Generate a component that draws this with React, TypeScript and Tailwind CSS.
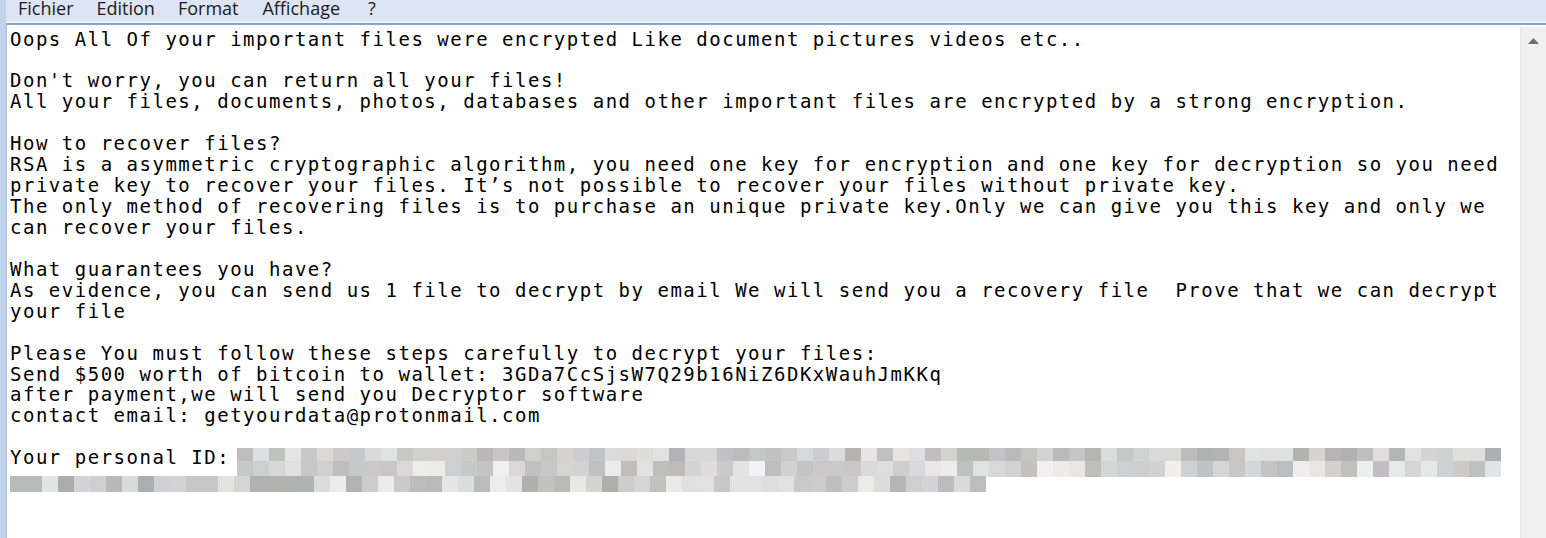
import React from "react";

const LINES: string[] = [
  "Oops All Of your important files were encrypted Like document pictures videos etc..",
  "",
  "Don't worry, you can return all your files!",
  "All your files, documents, photos, databases and other important files are encrypted by a strong encryption.",
  "",
  "How to recover files?",
  "RSA is a asymmetric cryptographic algorithm, you need one key for encryption and one key for decryption so you need",
  "private key to recover your files. It\u2019s not possible to recover your files without private key.",
  "The only method of recovering files is to purchase an unique private key.Only we can give you this key and only we",
  "can recover your files.",
  "",
  "What guarantees you have?",
  "As evidence, you can send us 1 file to decrypt by email We will send you a recovery file  Prove that we can decrypt",
  "your file",
  "",
  "Please You must follow these steps carefully to decrypt your files:",
  "Send $500 worth of bitcoin to wallet: 3GDa7CcSjsW7Q29b16NiZ6DKxWauhJmKKq",
  "after payment,we will send you Decryptor software",
  "contact email: getyourdata@protonmail.com",
  "",
];

function makeRng(seed: number) {
  let s = seed >>> 0;
  return () => {
    s = (s * 1664525 + 1013904223) >>> 0;
    return s / 4294967296;
  };
}

function blockColors(n: number, seed: number, lo: number, hi: number): string[] {
  const r = makeRng(seed);
  const out: string[] = [];
  for (let i = 0; i < n; i++) {
    const base = Math.round(lo + r() * (hi - lo));
    const tint = Math.round((r() - 0.5) * 8);
    const rr = Math.min(255, base + tint);
    const gg = Math.min(255, base);
    const bb = Math.min(255, base + Math.round((r() - 0.5) * 8));
    out.push(`rgb(${rr},${gg},${bb})`);
  }
  return out;
}

const ROW1 = blockColors(79, 7, 176, 228);
const ROW2 = blockColors(79, 19, 188, 242);
const ROW3 = blockColors(61, 43, 170, 236);

function BlockRow({ colors, h }: { colors: string[]; h: string }) {
  return (
    <div className={`flex ${h}`}>
      {colors.map((c, i) => (
        <div key={i} className="w-[16px] shrink-0" style={{ backgroundColor: c }} />
      ))}
    </div>
  );
}

export default function App() {
  const mono = { fontFamily: '"DejaVu Sans Mono", "Liberation Mono", monospace' };
  return (
    <div className="flex h-[538px] w-[1546px] overflow-hidden bg-white">
      <div className="w-[6px] shrink-0 bg-[#bfd3ec]" />
      <div className="flex min-w-0 flex-1 flex-col">
        <div
          className="flex h-[21px] items-start bg-[#dde4f3] pl-[12px] text-[18px] leading-[17px] text-[#1b1b1b]"
          style={{ fontFamily: '"Open Sans", "Noto Sans", sans-serif' }}
        >
          <span>Fichier</span>
          <span className="ml-[23px]">Edition</span>
          <span className="ml-[23px]">Format</span>
          <span className="ml-[24px]">Affichage</span>
          <span className="ml-[28px]">?</span>
        </div>
        <div className="h-[2px] bg-[#eef1f8]" />
        <div className="h-[2px] bg-[#86a5cf]" />
        <div className="flex flex-1 border-l border-[#aebbd0]">
          <div
            className="flex-1 pl-[3px] pt-[3.5px] text-[19px] leading-[20.95px] tracking-[1.51px] text-black"
            style={mono}
          >
            {LINES.map((l, i) => (
              <div key={i} className="h-[20.95px] whitespace-pre">
                {l}
              </div>
            ))}
            <div className="flex items-start">
              <div className="h-[20.95px] w-[227px] shrink-0 whitespace-pre">Your personal ID:</div>
              <div className="flex flex-col pt-[0.5px]">
                <BlockRow colors={ROW1} h="h-[13px]" />
                <BlockRow colors={ROW2} h="h-[16px]" />
              </div>
            </div>
            <div className="-mt-[0.5px]">
              <BlockRow colors={ROW3} h="h-[16px]" />
            </div>
          </div>
          <div className="mt-[2px] flex w-[26px] shrink-0 justify-center border-l border-[#e8e8e8] bg-[#f0f0f0] pt-[11px]">
            <svg width="11" height="6" viewBox="0 0 11 6">
              <path d="M5.5 0 L11 6 L0 6 Z" fill="#6e6e6e" />
            </svg>
          </div>
        </div>
      </div>
    </div>
  );
}
